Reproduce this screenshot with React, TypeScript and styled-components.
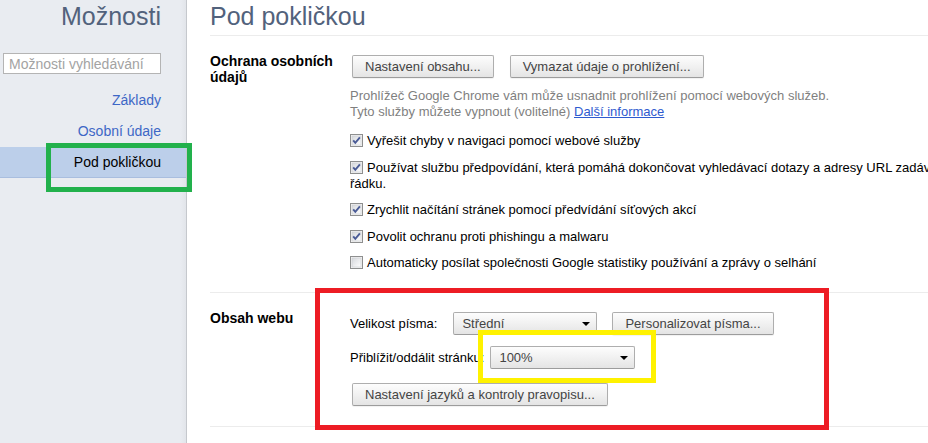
import React, { useId } from "react";
import styled, { createGlobalStyle } from "styled-components";

const GlobalStyle = createGlobalStyle`
  html, body {
    margin: 0;
    padding: 0;
    overflow: hidden;
    background: #ffffff;
    font-family: "Liberation Sans", Arial, sans-serif;
  }
`;

const Page = styled.div`
  position: relative;
  display: flex;
  width: 100vw;
  height: 100vh;
  overflow: hidden;
`;

const Sidebar = styled.nav`
  width: 186px;
  flex-shrink: 0;
  display: flex;
  flex-direction: column;
  background: linear-gradient(to right, #e9ecf1 0, #e9ecf1 180px, #e2e5ea 186px);
  border-right: 1px solid #c5c8cd;
`;

const SideTitle = styled.h1`
  margin: 0;
  height: 32px;
  line-height: 32px;
  padding-right: 25px;
  text-align: right;
  font-size: 25px;
  font-weight: normal;
  color: #52627c;
`;

const Search = styled.input`
  box-sizing: border-box;
  margin: 21px 0 0 3px;
  width: 158px;
  height: 21px;
  padding: 0 0 0 5px;
  border: 1px solid #b4b4b4;
  background: #fff;
  font-family: "Liberation Sans", Arial, sans-serif;
  font-size: 14px;
  outline: none;
  &::placeholder {
    color: #a3a3a3;
  }
`;

const NavList = styled.ul`
  list-style: none;
  margin: 11px 0 0;
  padding: 0;
`;

const NavItem = styled.li<{ $active?: boolean }>`
  box-sizing: border-box;
  height: 31px;
  line-height: 31px;
  padding-right: 25px;
  text-align: right;
  font-size: 14px;
  color: ${(p) => (p.$active ? "#000" : "#3d67c6")};
  background: ${(p) => (p.$active ? "#bccfea" : "transparent")};
  border-bottom: 1px solid ${(p) => (p.$active ? "#a9bedf" : "transparent")};
`;

const Main = styled.main`
  flex: 1;
  min-width: 0;
  padding-left: 23px;
`;

const Title = styled.h1`
  margin: 0;
  height: 35px;
  line-height: 32px;
  font-size: 25px;
  font-weight: normal;
  color: #52627c;
  border-bottom: 1px solid #ececec;
`;

const Section = styled.section<{ $bottom?: number }>`
  display: flex;
  width: 830px;
  padding: 17px 0 ${(p) => p.$bottom ?? 20}px;
  border-bottom: 1px solid #ececec;
`;

const SectionTitle = styled.h3`
  width: 140px;
  flex-shrink: 0;
  margin: 0;
  font-size: 14px;
  line-height: 16px;
  font-weight: bold;
  color: #000;
`;

const Controls = styled.div`
  flex: 1;
  padding-top: 2px;
  font-size: 13px;
  line-height: 16px;
  color: #000;
`;

const ButtonRow = styled.div<{ $top?: number }>`
  display: flex;
  gap: 16px;
  padding-left: 2px;
  margin-top: ${(p) => p.$top ?? 0}px;
`;

const Button = styled.button<{ $left?: number }>`
  box-sizing: border-box;
  height: 23px;
  padding: 0 12px;
  margin-left: ${(p) => p.$left ?? 0}px;
  border: 1px solid #aeaeae;
  border-bottom-color: #9c9c9c;
  border-radius: 2px;
  background: linear-gradient(to bottom, #fdfdfd 0%, #f1f1f1 50%, #e4e4e4 100%);
  box-shadow: 0 1px 1px rgba(0, 0, 0, 0.06);
  font-family: "Liberation Sans", Arial, sans-serif;
  font-size: 13px;
  color: #444;
  white-space: nowrap;
`;

const Description = styled.p`
  margin: 10px 0 0;
  color: #7f7f7f;
`;

const Link = styled.a`
  color: #2f5bcf;
  text-decoration: underline;
`;

const CheckList = styled.div`
  margin-top: 13px;
  display: flex;
  flex-direction: column;
  gap: 10.5px;
`;

const CheckRow = styled.label`
  display: block;
`;

const Box = styled.svg`
  display: inline-block;
  width: 13px;
  height: 13px;
  margin-right: 4px;
  vertical-align: -2px;
`;

const FormRow = styled.div<{ $top?: number }>`
  display: flex;
  align-items: center;
  height: 23px;
  margin-top: ${(p) => p.$top ?? 0}px;
`;

const Label = styled.span<{ $gap: number }>`
  margin-right: ${(p) => p.$gap}px;
  white-space: nowrap;
`;

const Select = styled.div<{ $width: number }>`
  box-sizing: border-box;
  position: relative;
  width: ${(p) => p.$width}px;
  height: 23px;
  line-height: 21px;
  padding-left: 8px;
  border: 1px solid #aeaeae;
  border-bottom-color: #9c9c9c;
  border-radius: 2px;
  background: linear-gradient(to bottom, #fdfdfd 0%, #f1f1f1 50%, #e4e4e4 100%);
  color: #444;
  &::after {
    content: "";
    position: absolute;
    right: 6px;
    top: 9px;
    border-left: 4px solid transparent;
    border-right: 4px solid transparent;
    border-top: 4px solid #000;
  }
`;

const Mark = styled.div<{ $color: string }>`
  position: absolute;
  box-sizing: border-box;
  border: 5px solid ${(p) => p.$color};
  pointer-events: none;
`;

const Checkbox: React.FC<{ checked?: boolean }> = ({ checked }) => {
  const id = useId().replace(/:/g, "");
  return (
    <Box viewBox="0 0 13 13">
      <defs>
        <linearGradient id={`g${id}`} x1="0" y1="0" x2="1" y2="1">
          <stop offset="0" stopColor="#d6d8dc" />
          <stop offset="1" stopColor="#ffffff" />
        </linearGradient>
      </defs>
      <rect x="0.5" y="0.5" width="12" height="12" fill="#f4f4f4" stroke="#8e8f8f" />
      <rect x="2" y="2" width="9" height="9" fill={`url(#g${id})`} stroke="#c9cbd0" strokeWidth="0.6" />
      {checked && (
        <path d="M3.2 6.3 L5.3 8.8 L9.9 3.4" fill="none" stroke="#4a5b96" strokeWidth="1.9" />
      )}
    </Box>
  );
};

export default function App() {
  return (
    <>
      <GlobalStyle />
      <Page>
        <Sidebar>
          <SideTitle>Možnosti</SideTitle>
          <Search placeholder="Možnosti vyhledávání" />
          <NavList>
            <NavItem>Základy</NavItem>
            <NavItem>Osobní údaje</NavItem>
            <NavItem $active>Pod pokličkou</NavItem>
          </NavList>
        </Sidebar>
        <Main>
          <Title>Pod pokličkou</Title>
          <Section $bottom={21}>
            <SectionTitle>Ochrana osobních údajů</SectionTitle>
            <Controls>
              <ButtonRow>
                <Button>Nastavení obsahu...</Button>
                <Button>Vymazat údaje o prohlížení...</Button>
              </ButtonRow>
              <Description>
                Prohlížeč Google Chrome vám může usnadnit prohlížení pomocí webových služeb.
                <br />
                Tyto služby můžete vypnout (volitelné) <Link>Další informace</Link>
              </Description>
              <CheckList>
                <CheckRow>
                  <Checkbox checked />
                  Vyřešit chyby v navigaci pomocí webové služby
                </CheckRow>
                <CheckRow>
                  <Checkbox checked />
                  Používat službu předpovídání, která pomáhá dokončovat vyhledávací dotazy a adresy URL zadávané do adresního řádku.
                </CheckRow>
                <CheckRow>
                  <Checkbox checked />
                  Zrychlit načítání stránek pomocí předvídání síťových akcí
                </CheckRow>
                <CheckRow>
                  <Checkbox checked />
                  Povolit ochranu proti phishingu a malwaru
                </CheckRow>
                <CheckRow>
                  <Checkbox />
                  Automaticky posílat společnosti Google statistiky používání a zprávy o selhání
                </CheckRow>
              </CheckList>
            </Controls>
          </Section>
          <Section>
            <SectionTitle>Obsah webu</SectionTitle>
            <Controls>
              <FormRow>
                <Label $gap={16}>Velikost písma:</Label>
                <Select $width={144}>Střední</Select>
                <Button $left={15}>Personalizovat písma...</Button>
              </FormRow>
              <FormRow $top={11}>
                <Label $gap={6}>Přiblížit/oddálit stránku:</Label>
                <Select $width={145}>100%</Select>
              </FormRow>
              <ButtonRow $top={14}>
                <Button>Nastavení jazyků a kontroly pravopisu...</Button>
              </ButtonRow>
            </Controls>
          </Section>
        </Main>
        <Mark $color="#22b14c" style={{ left: 46, top: 143, width: 146, height: 49 }} />
        <Mark $color="#ed1c24" style={{ left: 315, top: 288, width: 514, height: 142 }} />
        <Mark $color="#fff200" style={{ left: 478, top: 330, width: 178, height: 53 }} />
      </Page>
    </>
  );
}
